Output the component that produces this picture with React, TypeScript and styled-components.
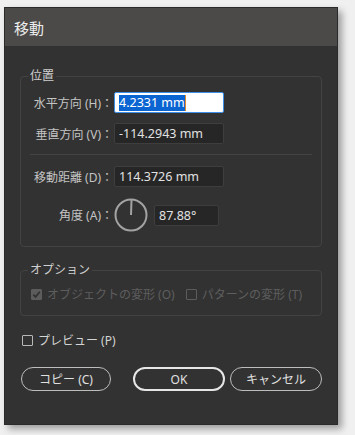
import React from "react";
import styled, { createGlobalStyle } from "styled-components";

const GlobalStyle = createGlobalStyle`
  html, body {
    margin: 0;
    padding: 0;
    background: #f0f0f0;
  }
  body {
    font-family: "Noto Sans", "Noto Sans CJK JP", sans-serif;
  }
`;

const Page = styled.div`
  width: 355px;
  height: 435px;
  padding: 7px 0 0 4px;
  box-sizing: border-box;
  overflow: hidden;
`;

const Dialog = styled.div`
  width: 334px;
  background: #323232;
  border: 1px solid #2a2a2a;
  box-sizing: border-box;
  box-shadow: 4px 4px 7px rgba(0, 0, 0, 0.35);
`;

const TitleBar = styled.div`
  height: 38px;
  background: #4b4a48;
  display: flex;
  align-items: center;
  padding-left: 9px;
  color: #ececec;
  font-size: 15px;
`;

const Body = styled.div`
  padding: 0 15px 33px 15px;
`;

const Group = styled.fieldset<{ $top: number; $pt: number; $pb: number }>`
  margin: ${p => p.$top}px 0 0 0;
  padding: ${p => p.$pt}px 9px ${p => p.$pb}px 9px;
  border: 1px solid #434343;
  border-radius: 4px;
  min-width: 0;
`;

const Legend = styled.legend`
  padding: 0 2px;
  margin-left: -2px;
  font-size: 12px;
  line-height: 16px;
  color: #cfcfcf;
`;

const Row = styled.div<{ $mt?: number }>`
  display: flex;
  align-items: center;
  margin-top: ${p => p.$mt ?? 0}px;
`;

const Label = styled.div`
  width: 83px;
  text-align: right;
  font-size: 12px;
  color: #c4c4c4;
  white-space: nowrap;
`;

const Field = styled.div<{ $width: number; $focused?: boolean; $ml?: number }>`
  margin-left: ${p => p.$ml ?? 1}px;
  width: ${p => p.$width}px;
  height: 21px;
  box-sizing: border-box;
  display: flex;
  align-items: center;
  padding-left: 4px;
  border-radius: 2px;
  font-size: 12.5px;
  background: ${p => (p.$focused ? "#ffffff" : "#262626")};
  border: 1px solid ${p => (p.$focused ? "#3d8ee6" : "#3e3e3e")};
  color: ${p => (p.$focused ? "#ffffff" : "#e2e2e2")};
`;

const Selected = styled.span`
  background: #0a64d2;
  color: #ffffff;
  line-height: 16px;
  border-right: 1px solid #e08a2a;
`;

const Divider = styled.div`
  height: 1px;
  background: #444444;
  margin: 10px 0 11px 0;
`;

const Dial = styled.svg`
  margin-left: 1px;
  display: block;
`;

const CheckRow = styled.div<{ $mt?: number }>`
  display: flex;
  align-items: center;
  height: 16px;
  margin-top: ${p => p.$mt ?? 0}px;
`;

const Box = styled.span<{ $checked?: boolean; $disabled?: boolean; $ml?: number }>`
  width: 11px;
  height: 11px;
  box-sizing: border-box;
  margin-left: ${p => p.$ml ?? 0}px;
  border: 1px solid ${p => (p.$disabled ? "#5c5c5c" : "#b8b8b8")};
  background: ${p => (p.$checked ? "#5c5c5c" : "transparent")};
  border-radius: 1px;
  display: flex;
  align-items: center;
  justify-content: center;
  flex: none;
`;

const CheckText = styled.span<{ $disabled?: boolean }>`
  margin-left: 5px;
  font-size: 12px;
  color: ${p => (p.$disabled ? "#5e5e5e" : "#d4d4d4")};
  white-space: nowrap;
`;

const Buttons = styled.div`
  display: flex;
  align-items: center;
  gap: 5px;
  margin-top: 19px;
  padding-left: 1px;
`;

const Spacer = styled.div`
  flex: 1;
`;

const Button = styled.button<{ $primary?: boolean; $w: number }>`
  width: ${p => p.$w}px;
  height: 24px;
  box-sizing: border-box;
  border-radius: 12px;
  background: transparent;
  border: ${p => (p.$primary ? "2px solid #e6e6e6" : "1px solid #bdbdbd")};
  color: #e0e0e0;
  font-family: "Noto Sans", "Noto Sans CJK JP", sans-serif;
  font-size: 12px;
  padding: 0;
  display: flex;
  align-items: center;
  justify-content: center;
`;

const App: React.FC = () => {
  return (
    <Page>
      <GlobalStyle />
      <Dialog>
        <TitleBar>移動</TitleBar>
        <Body>
          <Group $top={22} $pt={8} $pb={14}>
            <Legend>位置</Legend>
            <Row>
              <Label>水平方向 (H)：</Label>
              <Field $width={110} $focused>
                <Selected>4.2331 mm</Selected>
              </Field>
            </Row>
            <Row $mt={10}>
              <Label>垂直方向 (V)：</Label>
              <Field $width={110}>-114.2943 mm</Field>
            </Row>
            <Divider />
            <Row>
              <Label>移動距離 (D)：</Label>
              <Field $width={110}>114.3726 mm</Field>
            </Row>
            <Row $mt={11}>
              <Label>角度 (A)：</Label>
              <Dial width="34" height="34" viewBox="0 0 34 34">
                <circle cx="17" cy="17" r="15.5" fill="none" stroke="#a3a3a3" strokeWidth="2" />
                <line x1="17" y1="17" x2="17.5" y2="2" stroke="#a3a3a3" strokeWidth="2" />
              </Dial>
              <Field $width={65} $ml={6}>87.88°</Field>
            </Row>
          </Group>

          <Group $top={15} $pt={8} $pb={13}>
            <Legend>オプション</Legend>
            <CheckRow>
              <Box $checked $disabled $ml={1}>
                <svg width="9" height="9" viewBox="0 0 9 9">
                  <path d="M1.3 4.6 L3.6 6.9 L7.8 1.8" fill="none" stroke="#323232" strokeWidth="1.7" />
                </svg>
              </Box>
              <CheckText $disabled>オブジェクトの変形 (O)</CheckText>
              <Box $disabled $ml={11} />
              <CheckText $disabled>パターンの変形 (T)</CheckText>
            </CheckRow>
          </Group>

          <CheckRow $mt={16}>
            <Box $ml={2} />
            <CheckText>プレビュー (P)</CheckText>
          </CheckRow>

          <Buttons>
            <Button $w={90}>コピー (C)</Button>
            <Spacer />
            <Button $w={92} $primary>OK</Button>
            <Button $w={92}>キャンセル</Button>
          </Buttons>
        </Body>
      </Dialog>
    </Page>
  );
};

export default App;
